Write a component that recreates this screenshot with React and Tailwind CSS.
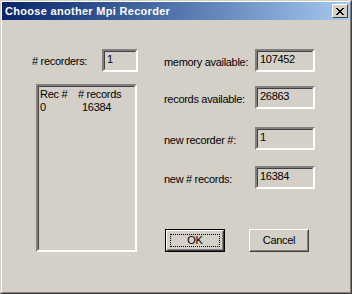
const sunken =
  'border-2 border-t-[#808080] border-l-[#808080] border-b-white border-r-white'

function Sunken({ className = '', children }) {
  // two-tone sunken edge like a Win2000 read-only edit box
  return (
    <div className={`${sunken} bg-[#d4d0c8] ${className}`}>
      <div className="h-full border border-t-[#404040] border-l-[#404040] border-b-[#d4d0c8] border-r-[#d4d0c8]">
        {children}
      </div>
    </div>
  )
}

function Field({ value, className = 'w-[60px]' }) {
  return (
    <Sunken className={`h-[23px] ${className}`}>
      <div className="pl-[2px] pt-[1px] leading-[13px]">{value}</div>
    </Sunken>
  )
}

function Row({ label, value }) {
  return (
    <div className="flex items-start">
      <div className="w-[91px] pt-[7px] leading-[13px]">{label}</div>
      <Field value={value} />
    </div>
  )
}

function Button({ children, def = false }) {
  const inner = (
    <div className="h-full border border-t-white border-l-white border-b-[#404040] border-r-[#404040]">
      <div className="h-full border border-t-[#d4d0c8] border-l-[#d4d0c8] border-b-[#808080] border-r-[#808080] p-[2px]">
        <div
          className={`h-full flex items-center justify-center leading-[13px] ${
            def ? 'border border-dotted border-black' : 'border border-transparent'
          }`}
        >
          {children}
        </div>
      </div>
    </div>
  )
  return (
    <div className={`w-[60px] h-[23px] ${def ? 'border border-black' : ''}`}>{inner}</div>
  )
}

export default function App() {
  return (
    <div
      className="w-[352px] h-[294px] bg-[#d4d0c8] text-black text-[11px] tracking-[-0.3px] border border-t-[#d4d0c8] border-l-[#d4d0c8] border-b-[#404040] border-r-[#404040]"
      style={{ fontFamily: '"Liberation Sans", Arial, sans-serif' }}
    >
      <div className="h-full flex flex-col border border-t-white border-l-white border-b-[#808080] border-r-[#808080]">
        {/* title bar */}
        <div className="h-[18px] flex items-center justify-between bg-gradient-to-r from-[#0a246a] to-[#a6caf0] pl-[3px] pr-[2px]">
          <span className="text-white font-bold tracking-[0.3px] leading-[18px]">
            Choose another Mpi Recorder
          </span>
          <div className="w-[16px] h-[14px] bg-[#d4d0c8] border border-t-white border-l-white border-b-[#404040] border-r-[#404040] flex items-center justify-center">
            <svg width="8" height="7" viewBox="0 0 8 7" shapeRendering="crispEdges">
              <path
                d="M0 0h2v1H0zM6 0h2v1H6zM1 1h2v1H1zM5 1h2v1H5zM2 2h4v1H2zM3 3h2v1H3zM2 4h4v1H2zM1 5h2v1H1zM5 5h2v1H5zM0 6h2v1H0zM6 6h2v1H6z"
                fill="#000"
              />
            </svg>
          </div>
        </div>

        {/* client */}
        <div className="flex pt-[29px] pl-[30px]">
          <div className="flex flex-col">
            <div className="flex items-start">
              <div className="w-[70px] pt-[6px] leading-[13px]">
                # recorders:
              </div>
              <Field value="1" className="w-[36px]" />
            </div>
            <Sunken className="ml-[4px] mt-[12px] w-[101px] h-[168px]">
              <div className="pl-[1px] pt-[1px] leading-[13px]">
                <div className="flex">
                  <span className="w-[38px]">Rec #</span>
                  <span># records</span>
                </div>
                <div className="flex">
                  <span className="w-[42px]">0</span>
                  <span>16384</span>
                </div>
              </div>
            </Sunken>
          </div>

          <div className="flex flex-col ml-[26px]">
            <Row label="memory available:" value="107452" />
            <div className="mt-[14px]">
              <Row label="records available:" value="26863" />
            </div>
            <div className="mt-[18px]">
              <Row label="new recorder #:" value="1" />
            </div>
            <div className="mt-[16px]">
              <Row label="new # records:" value="16384" />
            </div>
            <div className="flex gap-[24px] mt-[40px] ml-[1px]">
              <Button def>OK</Button>
              <Button>Cancel</Button>
            </div>
          </div>
        </div>
      </div>
    </div>
  )
}
